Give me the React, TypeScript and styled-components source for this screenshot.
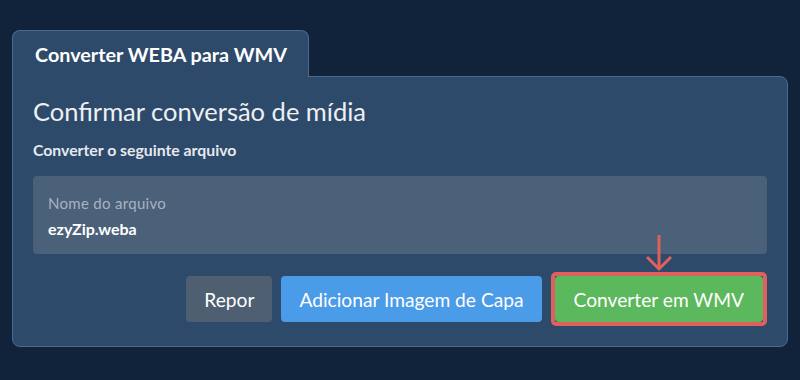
import styled, { createGlobalStyle } from "styled-components";

const GlobalStyle = createGlobalStyle`
  body {
    margin: 0;
    background: #11233a;
    font-family: Lato, "Open Sans", sans-serif;
    color: #f2f2f2;
  }
`;

const Page = styled.div`
  padding: 30px 12px 0 12px;
`;

const Tab = styled.div`
  display: inline-flex;
  align-items: center;
  height: 45px;
  padding: 0 21px 1px 22px;
  background: #2d4a6a;
  border: 1px solid #4c6a8d;
  border-bottom: none;
  border-radius: 8px 8px 0 0;
  font-size: 19.8px;
  font-weight: 700;
  color: #ffffff;
  position: relative;
  z-index: 1;
  margin-bottom: -1px;
`;

const Panel = styled.div`
  background: #2d4a6a;
  border: 1px solid #4c6a8d;
  border-radius: 0 8px 8px 8px;
  padding: 16px 20px 20px 20px;
`;

const Title = styled.h2`
  margin: 0;
  font-size: 25.5px;
  font-weight: 400;
  line-height: 36px;
  color: #eef0f3;
`;

const Subtitle = styled.p`
  margin: 11px 0 0 0;
  font-size: 15.8px;
  font-weight: 700;
  line-height: 20px;
  color: #e6e9ee;
`;

const FileBox = styled.div`
  margin-top: 16px;
  background: #4b6079;
  border-radius: 4px;
  padding: 18px 15px 15px 15px;
`;

const FileLabel = styled.div`
  font-size: 15px;
  letter-spacing: 0.3px;
  line-height: 18px;
  color: #a7b3c1;
`;

const FileName = styled.div`
  margin-top: 7px;
  font-size: 16px;
  font-weight: 700;
  line-height: 20px;
  color: #ffffff;
`;

const Actions = styled.div`
  margin-top: 18px;
  display: flex;
  justify-content: flex-end;
  align-items: center;
  gap: 9px;
`;

const Button = styled.button<{ $bg: string }>`
  height: 46px;
  padding: 0 18px;
  border: none;
  border-radius: 4px;
  background: ${(p) => p.$bg};
  color: #ffffff;
  font-family: Lato, "Open Sans", sans-serif;
  font-size: 19.2px;
  cursor: pointer;
`;

const ConvertButton = styled(Button)`
  padding: 0 19px;
`;

const Highlight = styled.div`
  position: relative;
  border: 4px solid #e0605b;
  border-radius: 5px;
  display: flex;
`;

const Arrow = styled.svg`
  position: absolute;
  left: 50%;
  top: -42px;
  transform: translateX(-50%);
`;

export default function App() {
  return (
    <Page>
      <GlobalStyle />
      <Tab>Converter WEBA para WMV</Tab>
      <Panel>
        <Title>Confirmar conversão de mídia</Title>
        <Subtitle>Converter o seguinte arquivo</Subtitle>
        <FileBox>
          <FileLabel>Nome do arquivo</FileLabel>
          <FileName>ezyZip.weba</FileName>
        </FileBox>
        <Actions>
          <Button $bg="#4e5f71">Repor</Button>
          <Button $bg="#4a9be8">Adicionar Imagem de Capa</Button>
          <Highlight>
            <Arrow width="30" height="38" viewBox="0 0 30 38">
              <path
                d="M15 1 V35 M3 23 L15 35 L27 23"
                fill="none"
                stroke="#e0605b"
                strokeWidth="3"
              />
            </Arrow>
            <ConvertButton $bg="#5cb85c">Converter em WMV</ConvertButton>
          </Highlight>
        </Actions>
      </Panel>
    </Page>
  );
}
